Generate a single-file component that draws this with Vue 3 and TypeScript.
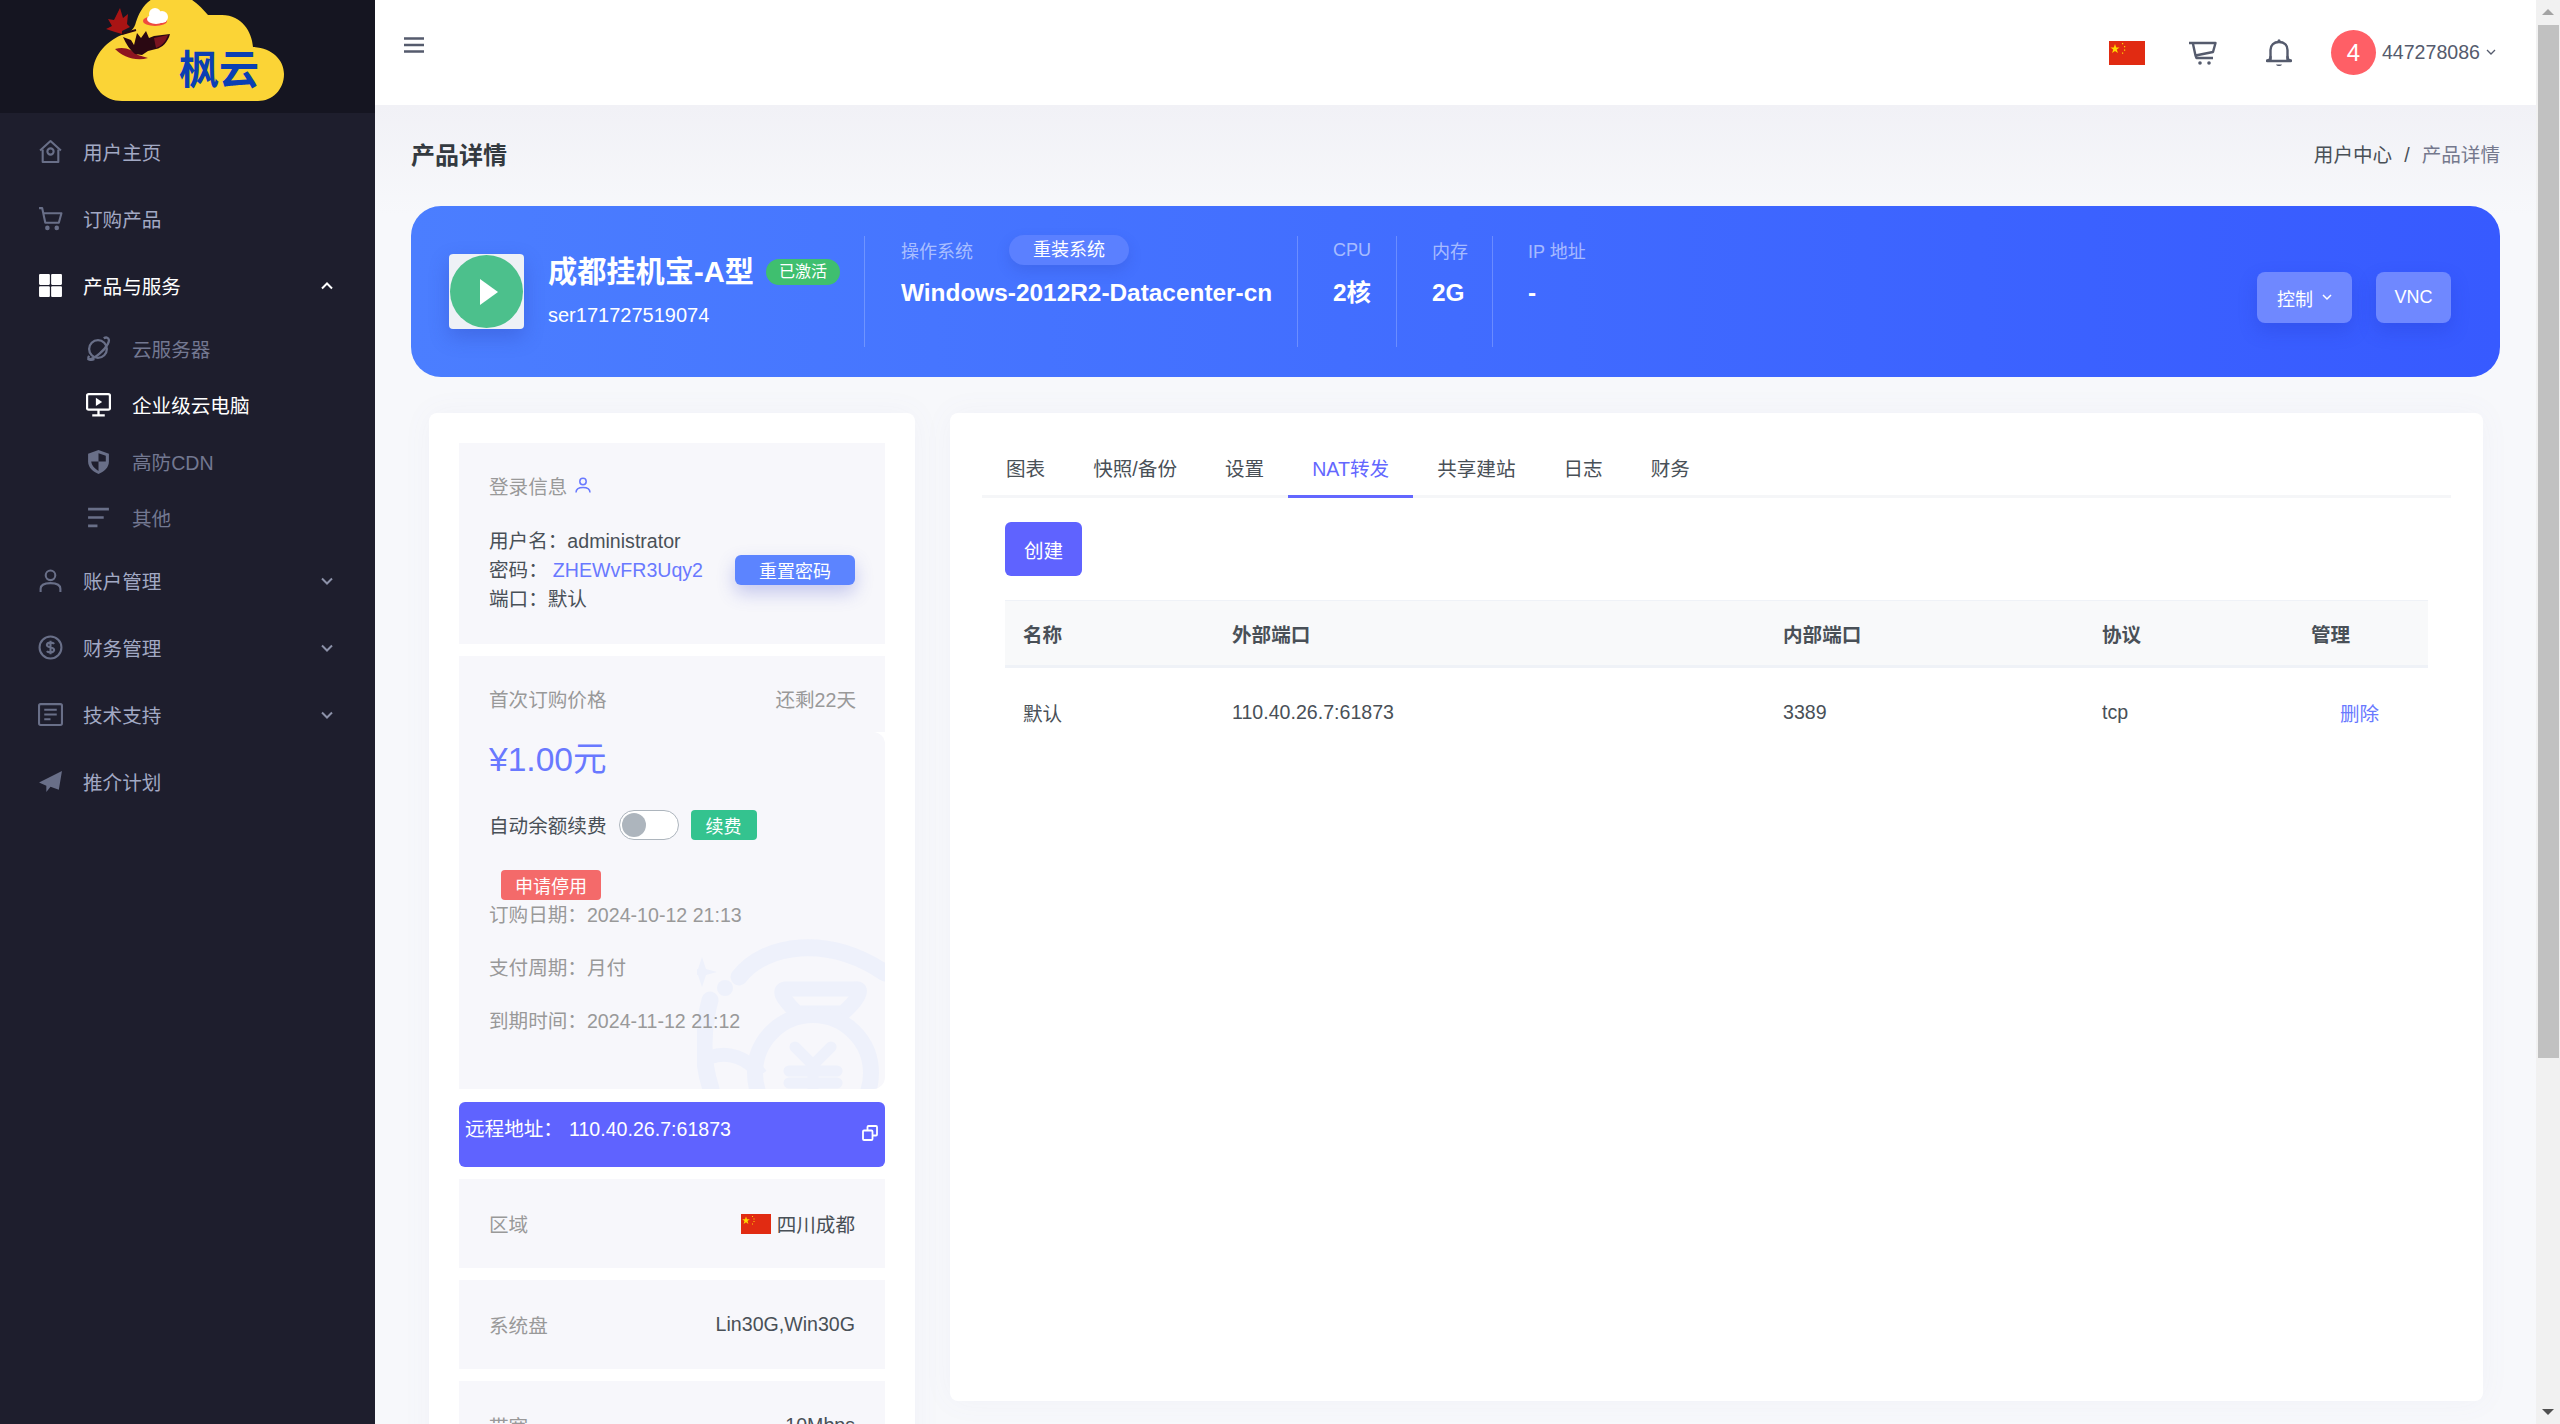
<script setup lang="ts">
interface NavItem {
	label: string
	icon: string
	arrow?: 'up' | 'down'
	active?: boolean
	children?: { label: string; icon: string; active?: boolean }[]
}

const nav: NavItem[] = [
	{ label: '用户主页', icon: 'home' },
	{ label: '订购产品', icon: 'cart' },
	{
		label: '产品与服务',
		icon: 'grid',
		arrow: 'up',
		active: true,
		children: [
			{ label: '云服务器', icon: 'planet' },
			{ label: '企业级云电脑', icon: 'screen', active: true },
			{ label: '高防CDN', icon: 'shield' },
			{ label: '其他', icon: 'lines' },
		],
	},
	{ label: '账户管理', icon: 'user', arrow: 'down' },
	{ label: '财务管理', icon: 'money', arrow: 'down' },
	{ label: '技术支持', icon: 'doc', arrow: 'down' },
	{ label: '推介计划', icon: 'plane' },
]

const tabs = ['图表', '快照/备份', '设置', 'NAT转发', '共享建站', '日志', '财务']
const activeTab = 'NAT转发'
</script>

<template>
	<div class="page">
		<aside class="side">
			<div class="logo">
				<svg class="logo-art" width="375" height="113" viewBox="0 0 375 113">
					<path d="M122 101C104 101 93 88 93 73C93 54 108 40 124 34C130 32 134 30 136 22C140 10 148-6 172-6C190-6 200 6 208 15C212 15 216 15 222 15C242 15 252 32 253 47C272 48 284 60 284 74C284 90 272 101 258 101Z" fill="#fbd436" />
					<path d="M120 8L123 18L128 14L127 24L130 27L122 31L122 34L115 32L106 29L112 26L108 19L114 20Z" fill="#a81414" />
					<path d="M122 34L136 30" stroke="#2a0812" stroke-width="2" />
					<path d="M115 49C125 46 132 50 138 55L148 58C135 62 122 56 115 49Z" fill="#8d1520" />
					<path d="M123 37L131 40L134 45L137 33L141 38L146 31L149 38L154 36L170 34C168 42 162 48 156 49L148 51L142 55L135 54C130 50 126 44 123 37Z" fill="#2a0812" />
					<path d="M154 38L168 35C166 41 162 46 156 48Z" fill="#7a1420" />
					<ellipse cx="155" cy="21" rx="12" ry="5" fill="#ef4a3f" />
					<circle cx="155" cy="14" r="6" fill="#fff" /><circle cx="162" cy="17" r="6" fill="#fff" /><ellipse cx="156" cy="19" rx="9" ry="5" fill="#fff" />
				</svg>
				<span class="logo-name">枫云</span>
			</div>
			<nav class="menu">
				<template v-for="item in nav" :key="item.label">
					<div class="menu-row" :class="{ on: item.active }">
						<svg class="menu-ico" viewBox="0 0 24 24" fill="none" stroke="currentColor" stroke-width="2">
							<template v-if="item.icon === 'home'">
								<path d="M2 11L12 2L22 11" stroke-linejoin="round" /><path d="M4.500 10V22H19.500V10" stroke-linejoin="round" /><circle cx="12" cy="12" r="3" />
							</template>
							<template v-else-if="item.icon === 'cart'">
								<path d="M1 2H4L7 16H20L22.500 7H5" stroke-linejoin="round" /><circle cx="9" cy="21" r="1.200" fill="currentColor" /><circle cx="18" cy="21" r="1.200" fill="currentColor" />
							</template>
							<template v-else-if="item.icon === 'grid'">
								<g fill="currentColor" stroke="none"><rect x="1" y="1" width="10.400" height="10.400" rx="1" /><rect x="12.600" y="1" width="10.400" height="10.400" rx="1" /><rect x="1" y="12.600" width="10.400" height="10.400" rx="1" /><rect x="12.600" y="12.600" width="10.400" height="10.400" rx="1" /></g>
							</template>
							<template v-else-if="item.icon === 'user'">
								<circle cx="12" cy="7" r="4.600" /><path d="M2.500 23V20C2.500 16 6 14.500 12 14.500C18 14.500 21.500 16 21.500 20V23" />
							</template>
							<template v-else-if="item.icon === 'money'">
								<circle cx="12" cy="12" r="10.500" /><path d="M15.500 8.500C14.500 7 9 6.500 8.500 9.500C8.500 12.500 15.500 11 15.500 14.500C15 17.500 9.500 17 8.500 15.500M12 5.500V18.500" />
							</template>
							<template v-else-if="item.icon === 'doc'">
								<rect x="1" y="2" width="22" height="20" rx="1.500" /><path d="M6 7.500H18M6 12H18M6 16.500H12" />
							</template>
							<template v-else>
								<path d="M1 13L23 2L20 20L12 17L8 22V16Z" fill="currentColor" stroke="none" />
							</template>
						</svg>
						<span class="menu-txt">{{ item.label }}</span>
						<svg v-if="item.arrow" class="menu-arrow" viewBox="0 0 14 10" fill="none" stroke="currentColor" stroke-width="2">
							<path :d="item.arrow === 'up' ? 'M2 7.500L7 2.500L12 7.500' : 'M2 2.500L7 7.500L12 2.500'" />
						</svg>
					</div>
					<div v-if="item.children" class="sub">
						<div v-for="child in item.children" :key="child.label" class="sub-row" :class="{ on: child.active }">
							<svg class="menu-ico" viewBox="0 0 24 24" fill="none" stroke="currentColor" stroke-width="2.200">
								<template v-if="child.icon === 'planet'">
									<circle cx="11.500" cy="12.500" r="8.500" /><path d="M3 19C0 24 6 23 13 17C20 11 25 3 20 1.500C19 1.300 18 1.600 17 2.200M1.500 22C3 23 6 23 8 22" />
								</template>
								<template v-else-if="child.icon === 'screen'">
									<rect x="1" y="2" width="22" height="15" rx="1.500" /><path d="M12 17V22M6 22.500H18" /><path d="M9.500 5.500L15.500 9.500L9.500 13.500Z" fill="currentColor" stroke="none" />
								</template>
								<template v-else-if="child.icon === 'shield'">
									<path d="M12 1L22 4.500V12C22 18 17 22 12 24C7 22 2 18 2 12V4.500Z" fill="currentColor" stroke="none" /><path d="M12 4L19 6.500V12H12ZM12 12H5C5.500 16 8.500 19 12 21Z" fill="#1e1e2d" stroke="none" />
								</template>
								<template v-else>
									<path d="M2 4H22M2 12H17M2 20H11" stroke-width="2.500" />
								</template>
							</svg>
							<span>{{ child.label }}</span>
						</div>
					</div>
				</template>
			</nav>
		</aside>

		<div class="main">
			<header class="topbar">
				<svg class="burger" viewBox="0 0 20 18" width="20" height="18" fill="none" stroke="#555b6d" stroke-width="2.600">
					<path d="M0 2.500H20M0 9H20M0 15.500H20" />
				</svg>
				<div class="top-right">
					<svg class="flag flag-top" viewBox="0 0 36 24">
						<rect width="36" height="24" fill="#e12b12" />
						<path d="M6 3L7.200 6.400L10.600 6.400L7.800 8.500L8.900 12L6 9.900L3.100 12L4.200 8.500L1.400 6.400L4.800 6.400Z" fill="#ffd800" />
						<path d="M13 2h1.200v1.200H13zM15 5h1.200v1.200H15zM15 8.500h1.200v1.200H15zM13 11.500h1.200v1.200H13z" fill="#ffd800" />
					</svg>
					<svg class="top-ico cart" viewBox="0 0 28 24" fill="none" stroke="#555b6d" stroke-width="2.400">
						<path d="M0 2H26.500L24 11L6.500 14.500L3.800 2M6.500 14.500L7.500 17H24" stroke-linejoin="round" />
						<circle cx="11" cy="22" r="1.800" fill="#555b6d" stroke="none" /><circle cx="20" cy="22" r="1.800" fill="#555b6d" stroke="none" />
					</svg>
					<svg class="top-ico bell" viewBox="0 0 26 28" fill="none" stroke="#555b6d" stroke-width="2.400">
						<path d="M4.500 21V11C4.500 6 8 3 13 3C18 3 21.500 6 21.500 11V21" />
						<path d="M1 21.500C3 21.500 4.500 20 4.500 18M25 21.500C23 21.500 21.500 20 21.500 18M1 22H25" stroke-linecap="round" />
						<path d="M10 25.500C11 27.500 15 27.500 16 25.500Z" fill="#555b6d" stroke="none" /><circle cx="13" cy="1.800" r="1.500" fill="#555b6d" stroke="none" />
					</svg>
					<div class="user">
						<span class="avatar">4</span>
						<span class="uid">447278086</span>
						<svg viewBox="0 0 10 7" width="10" height="7" fill="none" stroke="#555b6d" stroke-width="1.300"><path d="M1 1L5 5L9 1" /></svg>
					</div>
				</div>
			</header>

			<div class="content">
				<div class="title-row">
					<h1 class="page-title">产品详情</h1>
					<div class="crumb"><span class="crumb-a">用户中心</span><span class="crumb-sep">/</span><span class="crumb-b">产品详情</span></div>
				</div>

				<section class="banner">
					<div class="prod">
						<div class="prod-ico"><span class="prod-circle"><i class="prod-tri"></i></span></div>
						<div>
							<div class="prod-name">成都挂机宝-A型<span class="prod-badge">已激活</span></div>
							<div class="prod-sn">ser171727519074</div>
						</div>
					</div>
					<div class="spec spec-os">
						<div class="spec-k">操作系统<span class="pill">重装系统</span></div>
						<div class="spec-v">Windows-2012R2-Datacenter-cn</div>
					</div>
					<div class="spec spec-cpu">
						<div class="spec-k">CPU</div>
						<div class="spec-v">2核</div>
					</div>
					<div class="spec spec-mem">
						<div class="spec-k">内存</div>
						<div class="spec-v">2G</div>
					</div>
					<div class="spec spec-ip">
						<div class="spec-k">IP 地址</div>
						<div class="spec-v">-</div>
					</div>
					<div class="ban-btns">
						<button class="ban-btn ctl">控制<svg viewBox="0 0 10 7" width="10" height="7" fill="none" stroke="#fff" stroke-width="1.500"><path d="M1 1L5 5L9 1" /></svg></button>
						<button class="ban-btn vnc">VNC</button>
					</div>
				</section>

				<div class="cols">
					<aside class="left">
						<div class="box login">
							<div class="muted login-h">登录信息
								<svg viewBox="0 0 16 16" width="16" height="16" fill="none" stroke="#6979ff" stroke-width="1.500"><circle cx="8" cy="4.500" r="3.200" /><path d="M1 15.500C1 11.500 4 10.500 8 10.500C12 10.500 15 11.500 15 15.500" /></svg>
							</div>
							<div class="login-b">
								<div class="login-lines">
									<div>用户名：administrator</div>
									<div>密码：<a class="pw">ZHEWvFR3Uqy2</a></div>
									<div>端口：默认</div>
								</div>
								<button class="btn-reset">重置密码</button>
							</div>
						</div>

						<div class="price-wrap">
							<div class="box price-top">
								<span class="muted">首次订购价格</span>
								<span class="muted">还剩22天</span>
							</div>
							<div class="price-body">
								<svg class="wm" width="188" height="154" viewBox="0 0 188 154" fill="none" stroke="#eef1fb">
									<path d="M42 42C68 8 132 0 188 38" stroke-width="17" stroke-linecap="round" />
									<circle cx="28" cy="53" r="8" fill="#eef1fb" stroke="none" />
									<path d="M5 22L9 34L20 37L9 40L5 52L1 40L-10 37L1 34Z" fill="#eef1fb" stroke="none" />
									<path d="M88 54H158C168 52 160 66 146 78H100C88 66 80 56 88 54Z" stroke-width="15" stroke-linejoin="round" />
									<circle cx="116" cy="138" r="58" stroke-width="16" />
									<path d="M13 65C4 100 6 130 14 154" stroke-width="17" stroke-linecap="round" />
									<path d="M14 122C30 116 50 122 64 140" stroke-width="14" />
									<path d="M98 112L116 130L134 112M92 136H140M92 148H140M116 130V154" stroke-width="11" stroke-linecap="round" />
								</svg>
								<div class="price">¥1.00元</div>
								<div class="renew">
									<span>自动余额续费</span>
									<span class="switch"><i></i></span>
									<button class="btn-renew">续费</button>
								</div>
								<button class="btn-stop">申请停用</button>
								<div class="muted date-first">订购日期：2024-10-12 21:13</div>
								<div class="muted date">支付周期：月付</div>
								<div class="muted date">到期时间：2024-11-12 21:12</div>
							</div>
						</div>

						<div class="remote">
							<span class="remote-k">远程地址：</span><span>110.40.26.7:61873</span>
							<svg class="copy" viewBox="0 0 16 16" width="16" height="16" fill="none" stroke="#fff" stroke-width="1.800"><rect x="1" y="5.500" width="9.500" height="9.500" rx="1" /><path d="M5.500 5V2C5.500 1.400 5.900 1 6.500 1H14C14.600 1 15 1.400 15 2V9.500C15 10.100 14.600 10.500 14 10.500H11" /></svg>
						</div>

						<div class="box kv"><span class="muted">区域</span>
							<span class="kv-v">
								<svg class="flag" viewBox="0 0 30 20" width="30" height="20">
									<rect width="30" height="20" fill="#e12b12" />
									<path d="M5 2.500L6 5.300L8.800 5.300L6.500 7L7.400 10L5 8.200L2.600 10L3.500 7L1.200 5.300L4 5.300Z" fill="#ffd800" />
									<path d="M11 2h1v1h-1zM12.500 4.500h1v1h-1zM12.500 7h1v1h-1zM11 9.500h1v1h-1z" fill="#ffd800" />
								</svg>四川成都
							</span>
						</div>
						<div class="box kv"><span class="muted">系统盘</span><span class="kv-v">Lin30G,Win30G</span></div>
						<div class="box kv"><span class="muted">带宽</span><span class="kv-v">10Mbps</span></div>
					</aside>

					<section class="right">
						<div class="tabs">
							<span v-for="tab in tabs" :key="tab" class="tab" :class="{ on: tab === activeTab }">{{ tab }}</span>
						</div>
						<button class="btn-create">创建</button>
						<div class="tbl">
							<div class="tr th">
								<span>名称</span><span>外部端口</span><span>内部端口</span><span>协议</span><span>管理</span>
							</div>
							<div class="tr td">
								<span>默认</span><span>110.40.26.7:61873</span><span>3389</span><span>tcp</span><a class="del">删除</a>
							</div>
						</div>
					</section>
				</div>
			</div>
		</div>

		<div class="sbar">
			<i class="sbar-up"></i>
			<div class="sbar-track"><div class="sbar-thumb"></div></div>
			<i class="sbar-down"></i>
		</div>
	</div>
</template>

<style>
html, body {
	margin: 0;
	height: 100%;
	overflow: hidden;
}
</style>

<style scoped>
.page {
	display: flex;
	width: 2560px;
	height: 1424px;
	overflow: hidden;
	font-family: "Liberation Sans", "Noto Sans CJK SC", sans-serif;
	font-size: 19.6px;
	color: #495057;
}

.side {
	width: 375px;
	flex-shrink: 0;
	background: #1e1e2d;
}

.logo {
	position: relative;
	height: 113px;
	background: #151521;
	overflow: hidden;
}

.logo-art {
	position: absolute;
	left: 0;
	top: 0;
}

.logo-name {
	position: absolute;
	left: 179px;
	top: 46px;
	font-size: 40px;
	line-height: 48px;
	font-weight: 700;
	color: #0b3fb3;
}

.menu {
	padding-top: 5px;
}

.menu-row {
	display: flex;
	align-items: center;
	height: 67px;
	padding: 0 41px 0 38px;
	color: #a2a9c4;
}

.menu-row .menu-ico {
	width: 25px;
	height: 25px;
	color: #696f88;
	flex-shrink: 0;
}

.menu-txt {
	margin-left: 20px;
	flex: 1;
}

.menu-arrow {
	width: 14px;
	height: 10px;
	color: #8c91a8;
}

.menu-row.on {
	color: #fff;
}

.menu-row.on .menu-ico,
.menu-row.on .menu-arrow {
	color: #fff;
}

.sub {
	margin-top: 1px;
	margin-bottom: 1px;
}

.sub-row {
	display: flex;
	align-items: center;
	gap: 21px;
	height: 56.5px;
	padding-left: 86px;
	color: #737891;
}

.sub-row .menu-ico {
	width: 25px;
	height: 25px;
	color: #696f88;
}

.sub-row.on {
	color: #fff;
}

.sub-row.on .menu-ico {
	color: #fff;
}

.main {
	flex: 1;
	min-width: 0;
	display: flex;
	flex-direction: column;
	background: #f7f8fb;
}

.topbar {
	display: flex;
	align-items: center;
	justify-content: space-between;
	height: 105px;
	flex-shrink: 0;
	padding: 0 40px 16px 29px;
	box-sizing: border-box;
	background: #fff;
}

.top-right {
	display: flex;
	align-items: center;
	margin-top: 16px;
}

.flag {
	display: block;
}

.flag-top {
	width: 36px;
	height: 24px;
	margin-right: 44px;
}

.top-ico {
	display: block;
}

.cart {
	width: 28px;
	height: 24px;
	margin-right: 49px;
}

.bell {
	width: 26px;
	height: 28px;
	margin-right: 39px;
}

.user {
	display: flex;
	align-items: center;
}

.avatar {
	width: 45px;
	height: 45px;
	border-radius: 50%;
	background: #ff5f66;
	color: #fff;
	font-size: 24px;
	line-height: 45px;
	text-align: center;
}

.uid {
	margin: 0 6px;
	color: #555b6d;
}

.content {
	flex: 1;
	min-height: 0;
	padding: 0 36px;
	background: linear-gradient(#f1f1f6, #f7f8fb 110px);
}

.title-row {
	display: flex;
	align-items: center;
	justify-content: space-between;
	height: 101px;
	padding-bottom: 5px;
	box-sizing: border-box;
}

.page-title {
	margin: 0;
	font-size: 24px;
	font-weight: 700;
	color: #343a40;
}

.crumb {
	color: #495057;
}

.crumb-sep {
	margin: 0 12px;
}

.crumb-b {
	color: #74788d;
}

.banner {
	display: flex;
	height: 171px;
	box-sizing: border-box;
	border-radius: 30px;
	background: linear-gradient(90deg, #4b7eff, #375aff);
	padding: 30px 49px 30px 38px;
	color: #fff;
	position: relative;
}

.prod {
	display: flex;
	align-items: flex-start;
	gap: 24px;
	width: 415px;
	flex-shrink: 0;
	padding-top: 18px;
	box-sizing: border-box;
}

.prod-ico {
	display: flex;
	align-items: center;
	justify-content: center;
	width: 75px;
	height: 75px;
	border-radius: 4px;
	background: #eef1f6;
	box-shadow: 0 8px 20px rgba(40, 60, 170, 0.3);
}

.prod-circle {
	display: flex;
	align-items: center;
	justify-content: center;
	width: 73px;
	height: 73px;
	border-radius: 50%;
	background: #4cc08c;
}

.prod-tri {
	margin-left: 5px;
	width: 0;
	height: 0;
	border-left: 18px solid #fff;
	border-top: 13px solid transparent;
	border-bottom: 13px solid transparent;
}

.prod-name {
	display: flex;
	align-items: center;
	font-size: 29.2px;
	line-height: 36px;
	font-weight: 700;
	white-space: nowrap;
}

.prod-badge {
	margin-left: 12px;
	width: 74px;
	height: 26px;
	border-radius: 13px;
	background: #3fbf6f;
	font-size: 16px;
	line-height: 26px;
	font-weight: 400;
	text-align: center;
}

.prod-sn {
	margin-top: 12px;
	line-height: 26px;
	font-size: 20px;
}

.spec {
	box-sizing: border-box;
	height: 111px;
	border-left: 1px solid rgba(255, 255, 255, 0.22);
}

.spec-k {
	display: flex;
	align-items: center;
	height: 30px;
	margin-top: -1px;
	font-size: 18px;
	color: rgba(255, 255, 255, 0.55);
}

.spec-v {
	margin-top: 13px;
	line-height: 30px;
	font-size: 24.4px;
	font-weight: 700;
	white-space: nowrap;
}

.spec-os {
	width: 433px;
	padding-left: 36px;
}

.pill {
	margin-left: 36px;
	width: 120px;
	height: 30px;
	border-radius: 15px;
	background: #5b80ff;
	box-shadow: 0 6px 14px rgba(40, 60, 170, 0.2);
	color: #fff;
	font-size: 18px;
	line-height: 30px;
	text-align: center;
}

.spec-cpu {
	width: 99px;
	padding-left: 35px;
}

.spec-mem {
	width: 96px;
	padding-left: 35px;
}

.spec-ip {
	flex: 1;
	padding-left: 35px;
}

.ban-btns {
	display: flex;
	gap: 24px;
	margin-top: 36px;
}

.ban-btn {
	height: 51px;
	border: none;
	border-radius: 8px;
	background: #6f88ff;
	box-shadow: 0 8px 18px rgba(30, 50, 190, 0.25);
	color: #fff;
	font: inherit;
	font-size: 18px;
	padding: 0;
}

.ctl {
	width: 95px;
	display: flex;
	align-items: center;
	justify-content: center;
	gap: 9px;
}

.vnc {
	width: 75px;
}

.cols {
	display: flex;
	gap: 35px;
	margin-top: 36px;
	padding: 0 18px;
}

.left {
	width: 486px;
	flex-shrink: 0;
	height: 1100px;
	box-sizing: border-box;
	padding: 30px;
	border-radius: 8px 8px 0 0;
	background: #fff;
	box-shadow: 0 0 30px rgba(120, 120, 180, 0.05);
}

.box {
	background: #f7f7fb;
}

.muted {
	color: #999;
}

.login {
	height: 201px;
	box-sizing: border-box;
	padding: 30px 30px 30px;
}

.login-h {
	display: flex;
	align-items: center;
	gap: 8px;
	line-height: 28px;
}

.login-h svg {
	margin-top: -4px;
}

.login-b {
	display: flex;
	align-items: flex-start;
	margin-top: 26px;
}

.login-lines {
	line-height: 29px;
	width: 246px;
	white-space: nowrap;
	color: #495057;
}

.pw {
	margin-left: 5px;
	color: #6979ff;
}

.btn-reset {
	margin-top: 28px;
	width: 120px;
	height: 30px;
	border: none;
	border-radius: 6px;
	padding: 0;
	background: #5c84ff;
	box-shadow: 0 8px 18px rgba(80, 90, 210, 0.3);
	color: #fff;
	font: inherit;
	font-size: 18px;
}

.price-wrap {
	margin-top: 12px;
}

.price-top {
	display: flex;
	justify-content: space-between;
	align-items: center;
	height: 76px;
	padding: 9px 29px 0 30px;
	box-sizing: border-box;
}

.price-body {
	position: relative;
	height: 357px;
	box-sizing: border-box;
	padding: 0 30px;
	background: #f7f7fb;
	border-radius: 0 12px 12px 0;
	overflow: hidden;
}

.wm {
	position: absolute;
	left: 238px;
	bottom: 0;
}

.price {
	position: relative;
	margin-top: 8px;
	font-size: 33.6px;
	line-height: 40px;
	color: #6979ff;
}

.renew {
	position: relative;
	display: flex;
	align-items: center;
	gap: 12px;
	margin-top: 30px;
	height: 30px;
}

.renew > span:first-child {
	margin-top: -2px;
}

.switch {
	display: flex;
	align-items: center;
	width: 60px;
	height: 30px;
	box-sizing: border-box;
	padding-left: 2px;
	border: 1px solid #adb5bd;
	border-radius: 15px;
	background: #fff;
}

.switch i {
	width: 24px;
	height: 24px;
	border-radius: 50%;
	background: #adb5bd;
}

.btn-renew,
.btn-stop {
	display: block;
	height: 30px;
	border: none;
	border-radius: 4px;
	padding: 0;
	color: #fff;
	font: inherit;
	font-size: 18px;
}

.btn-renew {
	width: 66px;
	background: #34c38f;
}

.btn-stop {
	position: relative;
	margin: 30px 0 0 12px;
	width: 100px;
	background: #f46a6a;
}

.date-first {
	position: relative;
	margin-top: 2px;
	line-height: 26px;
}

.date {
	position: relative;
	margin-top: 27px;
	line-height: 26px;
}

.remote {
	position: relative;
	display: flex;
	height: 65px;
	margin-top: 13px;
	padding: 13px 6px 0;
	box-sizing: border-box;
	border-radius: 6px;
	background: #5f63ff;
	color: #fff;
	line-height: 28px;
}

.remote-k {
	width: 104px;
}

.copy {
	position: absolute;
	right: 7px;
	top: 23px;
}

.kv {
	display: flex;
	align-items: center;
	justify-content: space-between;
	height: 89px;
	margin-top: 12px;
	padding: 0 30px;
	box-sizing: border-box;
}

.kv-v {
	display: flex;
	align-items: center;
	gap: 6px;
	color: #495057;
}

.right {
	flex: 1;
	height: 988px;
	box-sizing: border-box;
	padding: 30px 55px 0;
	border-radius: 8px;
	background: #fff;
	box-shadow: 0 0 30px rgba(120, 120, 180, 0.05);
}

.tabs {
	display: flex;
	height: 55px;
	box-sizing: border-box;
	margin-right: -23px;
	margin-left: -23px;
	border-bottom: 3px solid #f5f6f8;
}

.tab {
	height: 55px;
	box-sizing: border-box;
	padding: 0 24px;
	line-height: 52px;
	color: #495057;
	white-space: nowrap;
}

.tab.on {
	color: #6367ff;
	border-bottom: 3px solid #6367ff;
}

.btn-create {
	display: block;
	width: 77px;
	height: 54px;
	margin-top: 24px;
	border: none;
	border-radius: 6px;
	padding: 0;
	background: #5f63ff;
	color: #fff;
	font: inherit;
}

.tbl {
	margin-top: 24px;
	width: 1423px;
}

.tr {
	display: grid;
	grid-template-columns: 209px 551px 319px 209px 135px;
	align-items: center;
}

.tr > * {
	padding-left: 18px;
}

.th {
	height: 68px;
	box-sizing: border-box;
	border-top: 1px solid #eff2f7;
	border-bottom: 3px solid #eff2f7;
	background: #f8f9fa;
	font-weight: 700;
}

.td {
	height: 89px;
}

.del {
	padding-left: 47px;
	color: #6979ff;
}

.sbar {
	display: flex;
	flex-direction: column;
	align-items: center;
	width: 24px;
	flex-shrink: 0;
	background: #f1f1f1;
}

.sbar-up,
.sbar-down {
	display: block;
	flex-shrink: 0;
	margin: 9px 0;
	width: 0;
	height: 0;
	border-left: 6px solid transparent;
	border-right: 6px solid transparent;
}

.sbar-up {
	border-bottom: 6px solid #a3a3a3;
}

.sbar-down {
	border-top: 6px solid #505050;
}

.sbar-track {
	flex: 1;
	width: 100%;
}

.sbar-thumb {
	width: 21px;
	height: 1033px;
	margin: 1px auto 0;
	background: #c1c1c1;
}
</style>
